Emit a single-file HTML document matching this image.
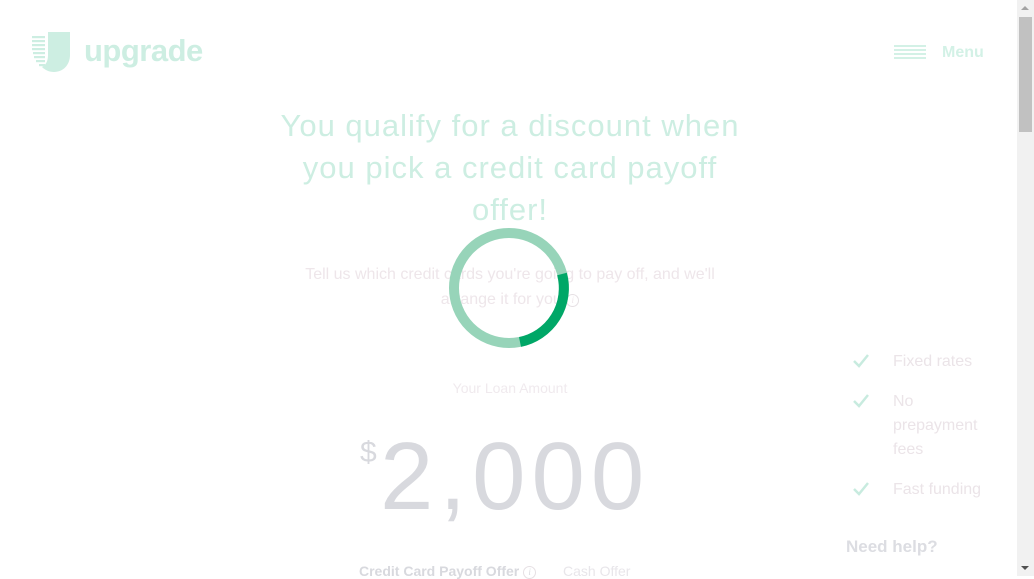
<!DOCTYPE html>
<html><head><meta charset="utf-8"><style>
html,body{margin:0;padding:0;width:1034px;height:576px;overflow:hidden;background:#fff;font-family:"Liberation Sans",sans-serif}
.abs{position:absolute}
.h1{left:250px;width:520px;top:105px;text-align:center;font-size:31px;line-height:42px;color:#cdeee2;font-weight:300;white-space:nowrap;letter-spacing:1px}
.sub{left:290px;width:440px;top:262px;text-align:center;font-size:16px;line-height:25px;color:#eee6ea}
.info{display:inline-block;width:11px;height:11px;border:1px solid #e6e0e4;border-radius:50%;font-size:9px;line-height:11px;text-align:center;font-style:italic;font-family:"Liberation Serif",serif;vertical-align:1px}
.feat{left:893px;font-size:16px;line-height:24px;color:#ebe4e8}
.chk{left:853px}
</style></head><body>
<svg class="abs" style="left:31px;top:31px" width="40" height="42" viewBox="0 0 40 42">
<rect x="1" y="5" width="13" height="2.2" fill="#cdeee2"/><rect x="1" y="9" width="13" height="2.2" fill="#cdeee2"/><rect x="1" y="13" width="13" height="2.2" fill="#cdeee2"/><rect x="1" y="17" width="13" height="2.2" fill="#cdeee2"/><rect x="2" y="21" width="12" height="2.2" fill="#cdeee2"/><rect x="3" y="25" width="11" height="2.2" fill="#cdeee2"/><rect x="5" y="29" width="9" height="2.2" fill="#cdeee2"/><rect x="8" y="33" width="6" height="2.2" fill="#cdeee2"/>
<path d="M17 1 H39 V24 C39 34 32 41 23 41 C18 41 14 39 11 36 C15 34 17 30 17 24 Z" fill="#cdeee2"/>
</svg>
<div class="abs" style="left:84px;top:33px;font-size:31px;font-weight:bold;color:#cdeee2;letter-spacing:-0.5px">upgrade</div>
<div class="abs" style="left:894px;top:45px;width:32px">
<div style="height:2px;background:#d3f1e6;margin-bottom:2px"></div><div style="height:2px;background:#d3f1e6;margin-bottom:2px"></div><div style="height:2px;background:#d3f1e6;margin-bottom:2px"></div><div style="height:2px;background:#d3f1e6"></div></div>
<div class="abs" style="left:942px;top:44px;font-size:16px;font-weight:bold;color:#d3f1e6">Menu</div>
<div class="abs h1">You qualify for a discount when<br>you pick a credit card payoff<br>offer!</div>
<div class="abs sub">Tell us which credit cards you're going to pay off, and we'll arrange it for you <span class="info">i</span></div>
<svg class="abs" style="left:448px;top:227px" width="122" height="122" viewBox="0 0 122 122">
<circle cx="61" cy="61" r="55" fill="none" stroke="#97d4b9" stroke-width="10"/>
<path d="M114 47 A55 55 0 0 1 72 115" fill="none" stroke="#00a767" stroke-width="10"/>
</svg>
<div class="abs" style="left:380px;width:260px;top:380px;text-align:center;font-size:14px;color:#f0eaee">Your Loan Amount</div>
<div class="abs" style="left:360px;top:436px;font-size:30px;color:#d8d9de;font-weight:300">$</div>
<div class="abs" style="left:380px;top:417px;font-size:96px;line-height:120px;color:#d8d9de;font-weight:300;letter-spacing:6px">2,000</div>
<div class="abs" style="left:359px;top:563px;font-size:14px;color:#d8d9de;font-weight:bold">Credit Card Payoff Offer <span class="info" style="font-weight:normal">i</span></div>
<div class="abs" style="left:563px;top:563px;font-size:14px;color:#e8e6ea">Cash Offer</div>
<svg class="abs chk" style="top:354px" width="16" height="14" viewBox="0 0 16 14"><path d="M1 7 L6 12 L15 1" fill="none" stroke="#c8ebdf" stroke-width="2.5"/></svg>
<div class="abs feat" style="top:350px">Fixed rates</div>
<svg class="abs chk" style="top:394px" width="16" height="14" viewBox="0 0 16 14"><path d="M1 7 L6 12 L15 1" fill="none" stroke="#c8ebdf" stroke-width="2.5"/></svg>
<div class="abs feat" style="top:390px">No<br>prepayment<br>fees</div>
<svg class="abs chk" style="top:482px" width="16" height="14" viewBox="0 0 16 14"><path d="M1 7 L6 12 L15 1" fill="none" stroke="#c8ebdf" stroke-width="2.5"/></svg>
<div class="abs feat" style="top:478px">Fast funding</div>
<div class="abs" style="left:846px;top:537px;font-size:17px;font-weight:bold;color:#dcdde2">Need help?</div>
<div class="abs" style="left:1017px;top:0;width:17px;height:576px;background:#f1f1f1"></div>
<div class="abs" style="left:1019px;top:17px;width:13px;height:115px;background:#c1c1c1"></div>
<div class="abs" style="left:1021px;top:6px;width:0;height:0;border-left:4px solid transparent;border-right:4px solid transparent;border-bottom:4px solid #a3a3a3"></div>
<div class="abs" style="left:1021px;top:566px;width:0;height:0;border-left:4px solid transparent;border-right:4px solid transparent;border-top:4px solid #505050"></div>
</body></html>
